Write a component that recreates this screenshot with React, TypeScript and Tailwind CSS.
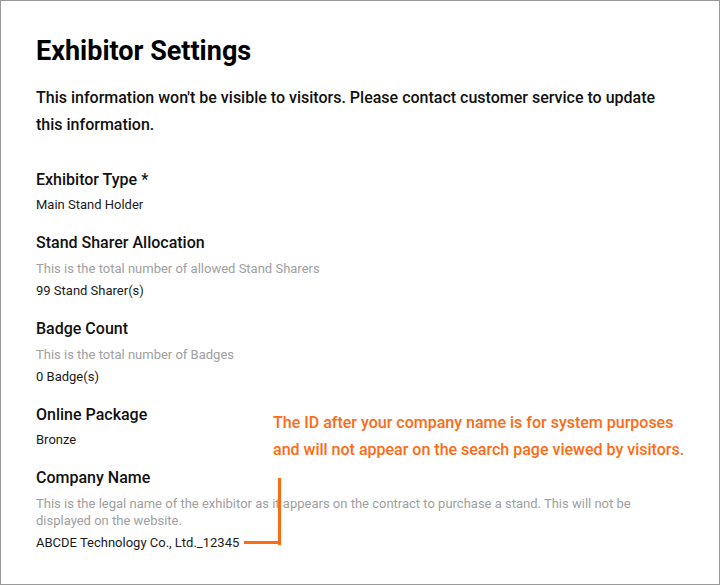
const fields = [
  { label: "Exhibitor Type *", value: "Main Stand Holder" },
  {
    label: "Stand Sharer Allocation",
    hint: "This is the total number of allowed Stand Sharers",
    value: "99 Stand Sharer(s)",
  },
  {
    label: "Badge Count",
    hint: "This is the total number of Badges",
    value: "0 Badge(s)",
  },
  { label: "Online Package", value: "Bronze" },
  {
    label: "Company Name",
    hint: "This is the legal name of the exhibitor as it appears on the contract to purchase a stand. This will not be displayed on the website.",
    value: "ABCDE Technology Co., Ltd._12345",
  },
]

export default function App() {
  return (
    <div className="relative h-[585px] w-[720px] overflow-hidden border border-[#9a9a9a] bg-white px-[35px] pt-[35px] font-['Roboto',sans-serif] text-[#111]">
      <h1 className="text-[27px] font-bold leading-[30px] text-black">Exhibitor Settings</h1>
      <p className="mt-[18px] text-base font-medium leading-[27px]">
        This information won't be visible to visitors. Please contact customer service to update this
        information.
      </p>

      <div className="mt-[30px] flex flex-col gap-[14px]">
        {fields.map((f) => (
          <div key={f.label}>
            <div className="text-base font-medium leading-6">{f.label}</div>
            {f.hint && (
              <div className="mt-[5px] text-[13px] leading-[17px] text-[#a0a0a0]">{f.hint}</div>
            )}
            <div className={`${f.hint ? "mt-[2px]" : "mt-[1px]"} text-[13px] leading-6 text-[#1a1a1a]`}>
              {f.value}
            </div>
          </div>
        ))}
      </div>

      {/* annotation overlay */}
      <p className="absolute left-[272px] top-[408px] text-base font-medium leading-[27px] text-[#ff6a14]">
        The ID after your company name is for system purposes
        <br />
        and will not appear on the search page viewed by visitors.
      </p>
      <div className="absolute left-[277px] top-[477px] h-[67px] w-[3px] bg-[#ff6a14]" />
      <div className="absolute left-[243px] top-[540px] h-[3px] w-[37px] bg-[#ff6a14]" />
    </div>
  )
}
